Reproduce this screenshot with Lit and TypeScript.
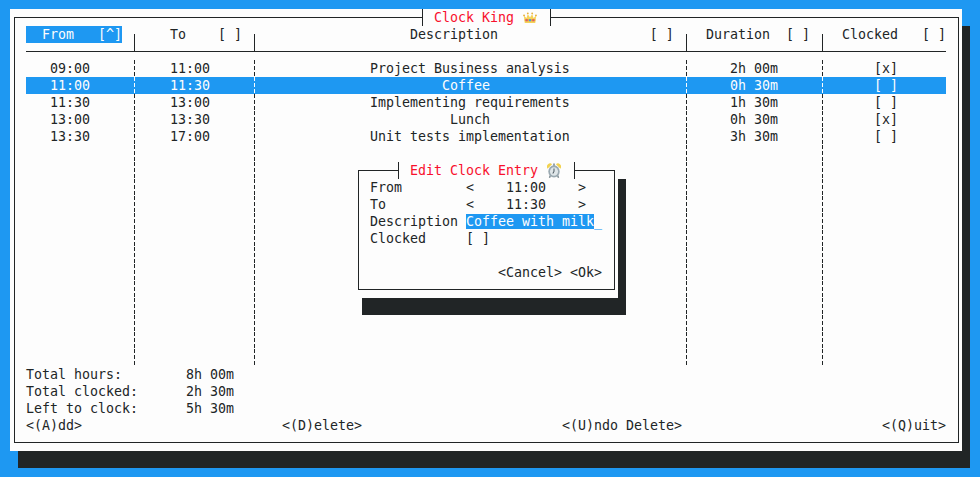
import { LitElement, html, css } from "lit";
import { customElement } from "lit/decorators.js";

const rows = [
  ["09:00", "11:00", "Project Business analysis", "2h 00m", "[x]"],
  ["11:00", "11:30", "Coffee", "0h 30m", "[ ]"],
  ["11:30", "13:00", "Implementing requirements", "1h 30m", "[ ]"],
  ["13:00", "13:30", "Lunch", "0h 30m", "[x]"],
  ["13:30", "17:00", "Unit tests implementation", "3h 30m", "[ ]"],
];

const crown = html`<svg class="emoji" viewBox="0 0 16 13" width="14" height="11" preserveAspectRatio="none" aria-hidden="true">
  <path d="M1 4.5 4 7 5.5 2.5 8 6.5 10.5 2.5 12 7 15 4.5 14 13H2Z" fill="#f5d25a"/>
  <circle cx="1.2" cy="4" r="1.1" fill="#e8b23f"/><circle cx="5.5" cy="1.6" r="1.1" fill="#e8b23f"/><circle cx="10.5" cy="1.6" r="1.1" fill="#e8b23f"/><circle cx="14.8" cy="4" r="1.1" fill="#e8b23f"/>
  <rect x="2" y="8.5" width="12" height="2.4" fill="#e9b13c"/>
  <rect x="3" y="8.5" width="2.4" height="2.4" fill="#e0566a"/><rect x="6.8" y="8.5" width="2.4" height="2.4" fill="#3f9fe0"/><rect x="10.6" y="8.5" width="2.4" height="2.4" fill="#e0566a"/>
</svg>`;

const clock = html`<svg class="emoji" viewBox="0 0 16 16" width="14" height="15" preserveAspectRatio="none" aria-hidden="true">
  <path d="M0.6 6A3.5 3.5 0 0 1 5.8 1.4ZM15.4 6A3.5 3.5 0 0 0 10.2 1.4Z" fill="#f2d24f"/>
  <path d="M7 0.5h2v3H7Z" fill="#8a979e"/>
  <path d="M4 13 2.8 15.7M12 13 13.2 15.7" stroke="#74828a" stroke-width="1.6"/>
  <circle cx="8" cy="9" r="6.5" fill="#9aa9b1"/><circle cx="8" cy="9" r="4.6" fill="#dfe6e9"/>
  <path d="M8 5.8V9L6.6 11.2" fill="none" stroke="#46535a" stroke-width="1.1"/>
</svg>`;

@customElement("app-root")
export class AppRoot extends LitElement {
  static styles = css`
    :host { display: block; }
    .screen {
      width: 980px; height: 477px; box-sizing: border-box; padding: 9px 10px;
      background: #1e98f2; color: #212526; overflow: hidden;
      font: 13.29px/17px "DejaVu Sans Mono", monospace;
    }
    .t { white-space: pre; }
    .window {
      position: relative; width: 952px; height: 442px; box-sizing: border-box;
      padding: 8px 3px 8px 4px; background: #fdfdfd; box-shadow: 8px 17px 0 #212526;
    }
    .frame {
      height: 100%; box-sizing: border-box; padding: 8px 12px 8px 11px;
      border: 1px solid #212526; display: flex; flex-direction: column;
    }
    .legend {
      position: absolute; top: 0; height: 17px; box-sizing: border-box;
      display: flex; align-items: center; background: #fdfdfd; color: #f8102c;
      border-left: 1px solid #212526; border-right: 1px solid #212526;
      white-space: pre;
    }
    .legend.main { left: 412px; width: 129px; padding-left: 11px; }
    .emoji { margin-left: 9px; flex: none; }
    .table { flex: 1; display: flex; flex-direction: column; }
    .grid {
      display: grid; grid-template-columns: 104px 8px 112px 8px 424px 8px 128px 8px 120px;
    }
    .head { height: 25px; border-bottom: 1px solid #212526; margin-bottom: 8px; }
    .head .t { height: 17px; }
    .sort { display: inline-block; width: 96px; background: #1e98f2; color: #fdfdfd; }
    .tick {
      align-self: end; height: 17px;
      background: linear-gradient(#212526, #212526) center / 1px 100% no-repeat;
    }
    .dash {
      background: linear-gradient(#212526 0 4px, transparent 4px 6px, #212526 6px 10px, transparent 10px 12px, #212526 12px 16px, transparent 16px 17px) center top / 1px 17px repeat-y;
    }
    .row { height: 17px; }
    .row.on { background: #1e98f2; color: #fdfdfd; }
    .row.on .dash {
      background-image: linear-gradient(#fdfdfd 0 4px, transparent 4px 6px, #fdfdfd 6px 10px, transparent 10px 12px, #fdfdfd 12px 16px, transparent 16px 17px);
    }
    .fill { flex: 1; }
    .from { padding-left: 24px; }
    .to { padding-left: 32px; }
    .dur { padding-left: 40px; }
    .clk { padding-left: 48px; }
    .summary { display: grid; grid-template-columns: 160px 1fr; }
    .actions { display: flex; justify-content: space-between; }
    .dialog {
      position: absolute; left: 344px; top: 153px; width: 264px; height: 136px; box-sizing: border-box;
      padding: 8px 3px 8px 4px; background: #fdfdfd; box-shadow: 8px 17px 0 #212526;
    }
    .legend.sub { left: 44px; width: 177px; padding-left: 11px; }
    .field { display: grid; grid-template-columns: 96px 1fr; height: 17px; }
    .spin { display: grid; grid-template-columns: 40px 72px 1fr; }
    .input { color: #1e98f2; }
    .input b { font-weight: normal; background: #1e98f2; color: #fdfdfd; }
    .buttons { margin-top: 17px; display: flex; justify-content: flex-end; gap: 8px; }
  `;

  private field(label: string, value: unknown) {
    return html`<div class="field"><span class="t">${label}</span>${value}</div>`;
  }

  private spin(v: string) {
    return html`<span class="spin t"><span>&lt;</span><span>${v}</span><span>&gt;</span></span>`;
  }

  private center(s: string) {
    return " ".repeat(Math.floor((53 - s.length) / 2)) + s;
  }

  render() {
    return html`<div class="screen">
      <div class="window">
        <div class="frame">
          <div class="table">
            <div class="grid head">
              <div class="t"><span class="sort">  From   [^]</span></div><div class="tick"></div>
              <div class="t">    To    [ ]</div><div class="tick"></div>
              <div class="t">${" ".repeat(19)}Description${" ".repeat(19)}[ ]</div><div class="tick"></div>
              <div class="t">  Duration  [ ]</div><div class="tick"></div>
              <div class="t">  Clocked   [ ]</div>
            </div>
            ${rows.map((r, i) => html`<div class="grid row ${i === 1 ? "on" : ""}">
              <div class="t from">${r[0]}</div><div class="dash"></div>
              <div class="t to">${r[1]}</div><div class="dash"></div>
              <div class="t">${this.center(r[2])}</div><div class="dash"></div>
              <div class="t dur">${r[3]}</div><div class="dash"></div>
              <div class="t clk">${r[4]}</div>
            </div>`)}
            <div class="grid fill">
              <div></div><div class="dash"></div><div></div><div class="dash"></div>
              <div></div><div class="dash"></div><div></div><div class="dash"></div><div></div>
            </div>
          </div>
          <div class="summary t">
            <span>Total hours:</span><span>8h 00m</span>
            <span>Total clocked:</span><span>2h 30m</span>
            <span>Left to clock:</span><span>5h 30m</span>
          </div>
          <div class="actions t">
            <span>&lt;(A)dd&gt;</span><span>&lt;(D)elete&gt;</span><span>&lt;(U)ndo Delete&gt;</span><span>&lt;(Q)uit&gt;</span>
          </div>
        </div>
        <div class="legend main">Clock King${crown}</div>
        <div class="dialog">
          <div class="frame">
            ${this.field("From", this.spin("11:00"))}
            ${this.field("To", this.spin("11:30"))}
            ${this.field("Description", html`<span class="t input"><b>Coffee with milk</b>_</span>`)}
            ${this.field("Clocked", html`<span class="t">[ ]</span>`)}
            <div class="buttons t"><span>&lt;Cancel&gt;</span><span>&lt;Ok&gt;</span></div>
          </div>
          <div class="legend sub">Edit Clock Entry${clock}</div>
        </div>
      </div>
    </div>`;
  }
}
